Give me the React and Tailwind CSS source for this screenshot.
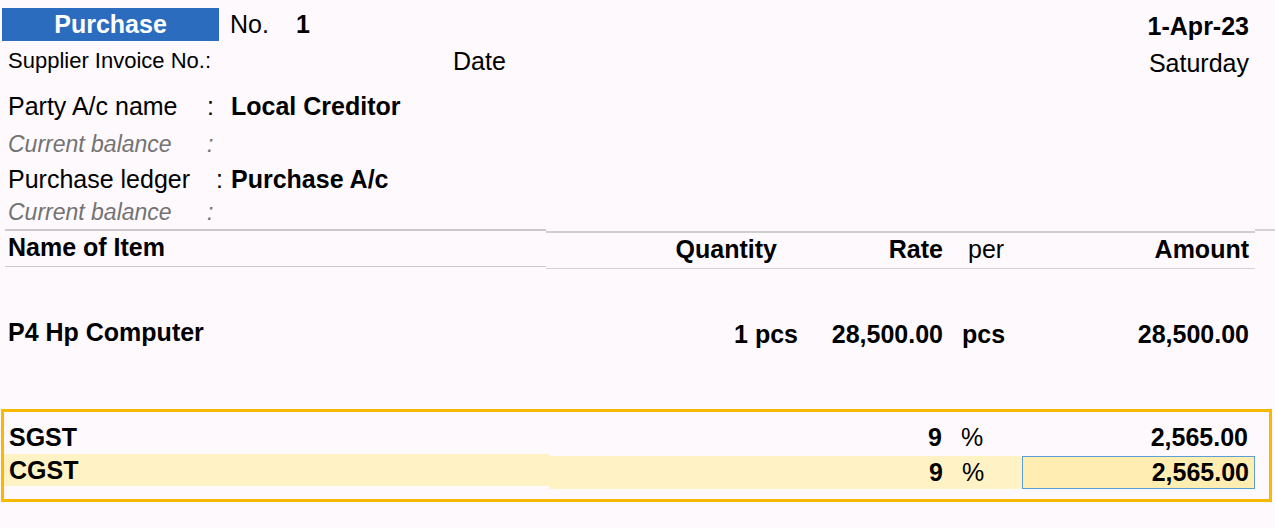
export default function App() {
  const font = { fontFamily: '"Liberation Sans", Arial, sans-serif' };
  return (
    <div className="w-[1275px] h-[528px] bg-[#fdf9fd] text-black overflow-hidden relative leading-none" style={font}>
      {/* voucher header */}
      <div className="flex items-center h-[33px] mt-[8px]">
        <div className="ml-[2px] w-[217px] h-[33px] bg-[#2b6cbf] text-white font-bold text-[25px] flex items-center justify-center">Purchase</div>
        <div className="ml-[11px] text-[25px]">No.</div>
        <div className="ml-[27px] text-[25px] font-bold">1</div>
        <div className="ml-auto mr-[26px] text-[25px] font-bold mt-[4px]">1-Apr-23</div>
      </div>
      <div className="flex items-center h-[40px]">
        <div className="ml-[8px] w-[445px] text-[22px]">Supplier Invoice No.:</div>
        <div className="text-[25px]">Date</div>
        <div className="ml-auto mr-[26px] text-[25px] mt-[4px]">Saturday</div>
      </div>

      {/* ledgers */}
      <div className="mt-[6px]">
        <div className="flex items-center h-[38px]">
          <div className="ml-[8px] w-[199px] text-[25px]">Party A/c name</div>
          <div className="w-[24px] text-[25px]">:</div>
          <div className="text-[25px] font-bold">Local Creditor</div>
        </div>
        <div className="flex items-center h-[38px] text-[#737373] italic">
          <div className="ml-[8px] w-[199px] text-[23px]">Current balance</div>
          <div className="text-[23px]">:</div>
        </div>
        <div className="flex items-center h-[32px]">
          <div className="ml-[8px] w-[208px] text-[25px]">Purchase ledger</div>
          <div className="w-[15px] text-[25px]">:</div>
          <div className="text-[25px] font-bold">Purchase A/c</div>
        </div>
        <div className="flex items-center h-[34px] text-[#737373] italic">
          <div className="ml-[8px] w-[199px] text-[23px]">Current balance</div>
          <div className="text-[23px]">:</div>
        </div>
      </div>

      {/* column headings */}
      <div className="flex h-[3px]">
        <div className="ml-[5px] w-[541px] h-[2px] bg-[#c9c9c9]"></div>
        <div className="w-[709px] h-[2px] mt-[2px] bg-[#cfcfcf]"></div>
        <div className="flex-1 h-[2px] bg-[#d3d3d3]"></div>
      </div>
      <div className="flex items-center h-[34px] text-[25px]">
        <div className="ml-[8px] flex-1 font-bold -mt-[3px]">Name of Item</div>
        <div className="w-[200px] text-right pr-[23px] font-bold">Quantity</div>
        <div className="w-[144px] text-right font-bold pr-[1px]">Rate</div>
        <div className="w-[78px] pl-[24px]">per</div>
        <div className="w-[233px] text-right pr-[6px] font-bold mr-[20px]">Amount</div>
      </div>
      <div className="flex h-[3px]">
        <div className="ml-[5px] w-[541px] h-[1px] bg-[#cdcdcd]"></div>
        <div className="w-[709px] h-[1px] mt-[2px] bg-[#d3d3d3]"></div>
      </div>

      {/* item */}
      <div className="flex items-center h-[140px] pb-[10px] text-[25px] font-bold">
        <div className="ml-[8px] flex-1 -mt-[3px]">P4 Hp Computer</div>
        <div className="w-[200px] text-right pr-[2px]">1 pcs</div>
        <div className="w-[144px] text-right pr-[1px]">28,500.00</div>
        <div className="w-[78px] pl-[18px]">pcs</div>
        <div className="w-[233px] text-right pr-[6px] mr-[20px]">28,500.00</div>
      </div>

      {/* duties */}
      <div className="ml-[1px] w-[1271px] h-[93px] border-[3px] border-[#f6b900] pt-[8px]">
        <div className="flex items-center h-[34px] text-[25px] font-bold">
          <div className="ml-[5px] flex-1">SGST</div>
          <div className="w-[144px] text-right pr-[1px]">9</div>
          <div className="w-[78px] pl-[18px] font-normal">%</div>
          <div className="w-[233px] text-right pr-[6px] mr-[15px]">2,565.00</div>
        </div>
        <div className="flex items-start h-[36px] text-[25px] font-bold">
          <div className="w-[545px] h-[32px] bg-[#fff3c6] flex items-center pl-[5px]">CGST</div>
          <div className="flex-1 h-[33px] mt-[2px] bg-[#fff3c6] flex items-center -mr-[1px]">
            <div className="flex-1 text-right pr-[1px]">9</div>
            <div className="w-[78px] pl-[18px] font-normal">%</div>
            <div className="w-[233px] h-[33px] border border-[#5a9fd6] bg-[#ffedb2] flex items-center justify-end pr-[5px]">2,565.00</div>
          </div>
          <div className="w-[15px]"></div>
        </div>
      </div>
    </div>
  );
}
